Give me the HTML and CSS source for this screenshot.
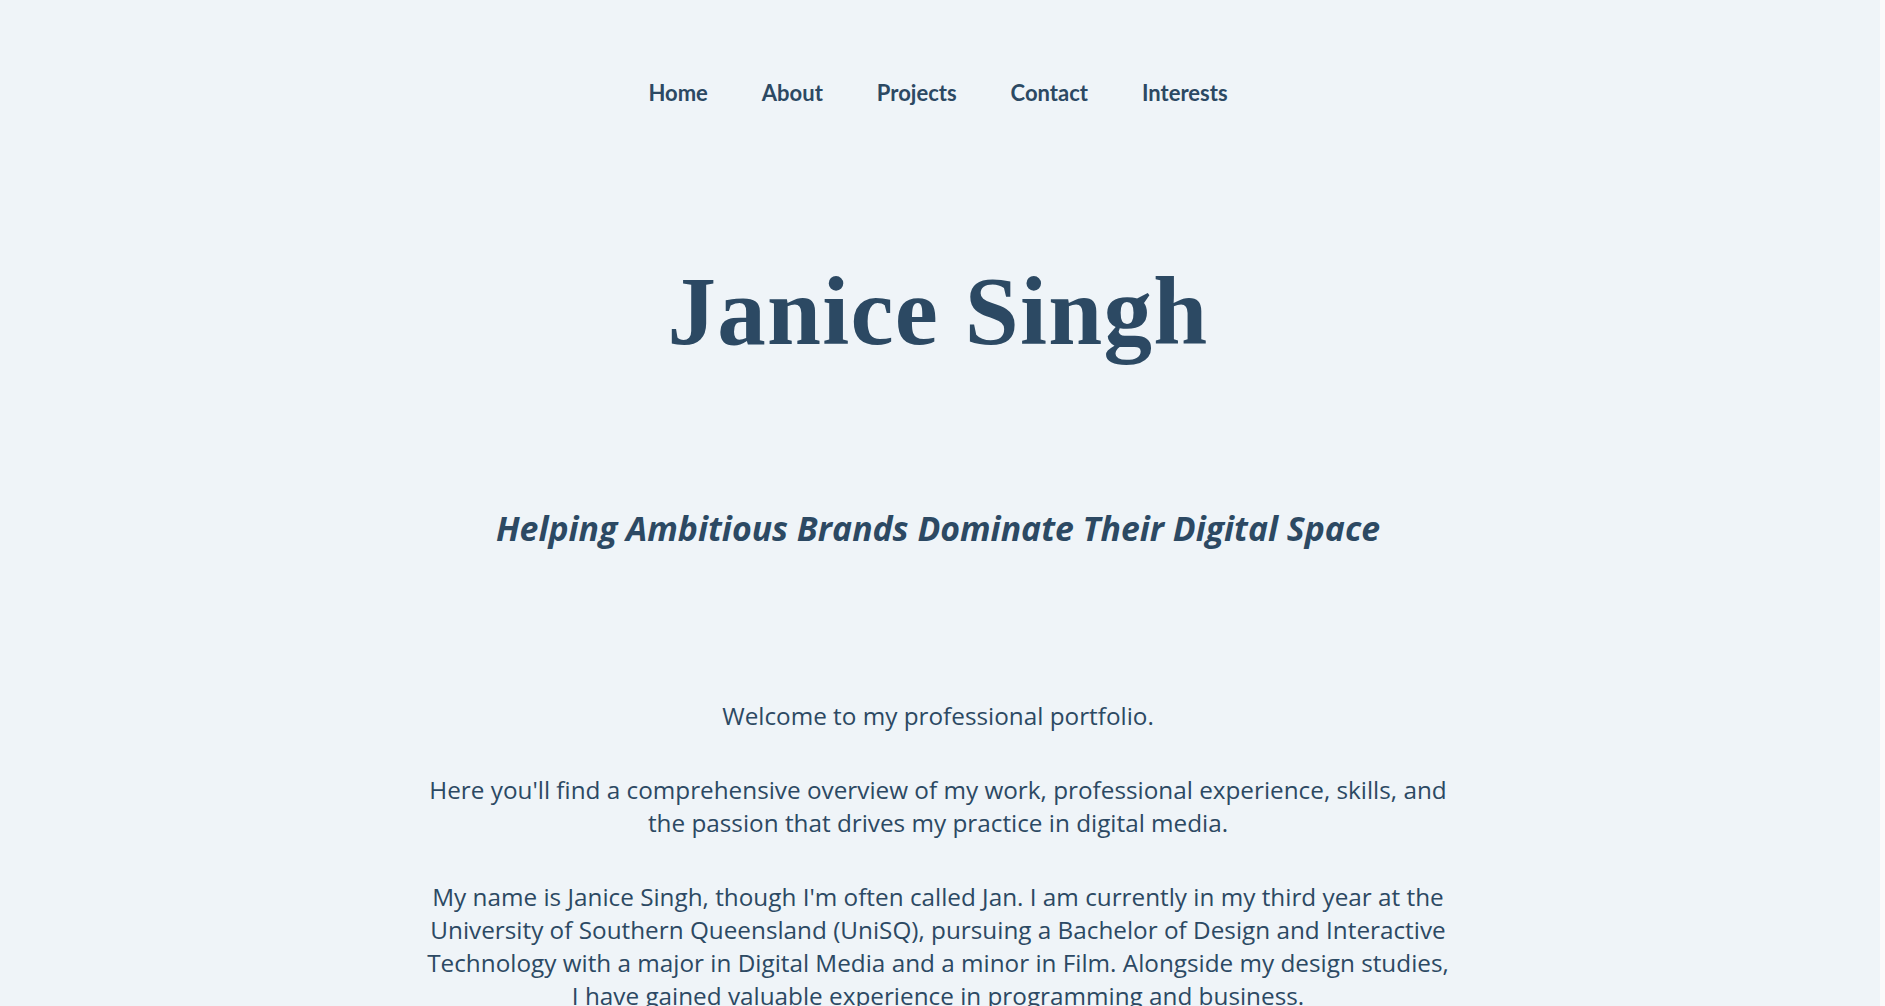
FILE: index.html
```html
<!DOCTYPE html>
<html lang="en">
<head>
<meta charset="utf-8">
<title>Janice Singh</title>
<link rel="stylesheet" href="styles.css">
</head>
<body>
<div class="page">
  <nav class="nav">
    <a href="#">Home</a>
    <a href="#">About</a>
    <a href="#">Projects</a>
    <a href="#">Contact</a>
    <a href="#">Interests</a>
  </nav>
  <header class="hero">
    <h1 class="title">Janice Singh</h1>
    <h2 class="tagline">Helping Ambitious Brands Dominate Their Digital Space</h2>
  </header>
  <main class="intro">
    <p>Welcome to my professional portfolio.</p>
    <p>Here you'll find a comprehensive overview of my work, professional experience, skills, and the passion that drives my practice in digital media.</p>
    <p>My name is Janice Singh, though I'm often called Jan. I am currently in my third year at the University of Southern Queensland (UniSQ), pursuing a Bachelor of Design and Interactive Technology with a major in Digital Media and a minor in Film. Alongside my design studies, I have gained valuable experience in programming and business.</p>
  </main>
</div>
<div class="scrollbar"></div>
</body>
</html>
```
FILE: styles.css
```css
html, body {
  margin: 0;
  padding: 0;
  background: #eff4f8;
  overflow: hidden;
}
body {
  color: #2c4963;
  font-family: "Open Sans", "Liberation Sans", sans-serif;
}
.page {
  margin-right: 9px;
  display: flex;
  flex-direction: column;
  align-items: center;
}
.nav {
  display: flex;
  gap: 54px;
  padding-top: 80px;
  font-family: Lato, "Open Sans", sans-serif;
  font-weight: 700;
  font-size: 22px;
  line-height: 1.2;
}
.nav a {
  color: #2c4963;
  text-decoration: none;
}
.hero {
  display: flex;
  flex-direction: column;
  align-items: center;
}
.title {
  margin: 148px 0 0;
  font-family: "Liberation Serif", "DejaVu Serif", serif;
  font-weight: 700;
  font-size: 97px;
  line-height: 1.2;
  letter-spacing: 1.3px;
  color: #2c4963;
}
.tagline {
  margin: 137px 0 0;
  font-family: "Open Sans", sans-serif;
  font-style: italic;
  font-weight: 700;
  font-size: 33.8px;
  line-height: 1.2;
  color: #2c4963;
}
.intro {
  max-width: 1027px;
  margin-top: 151px;
  text-align: center;
  font-size: 24.3px;
  line-height: 33px;
}
.intro p {
  margin: 0 0 41px;
}
.scrollbar {
  position: fixed;
  top: 0;
  right: 0;
  width: 5px;
  height: 100%;
  background: #fafafa;
}
```
